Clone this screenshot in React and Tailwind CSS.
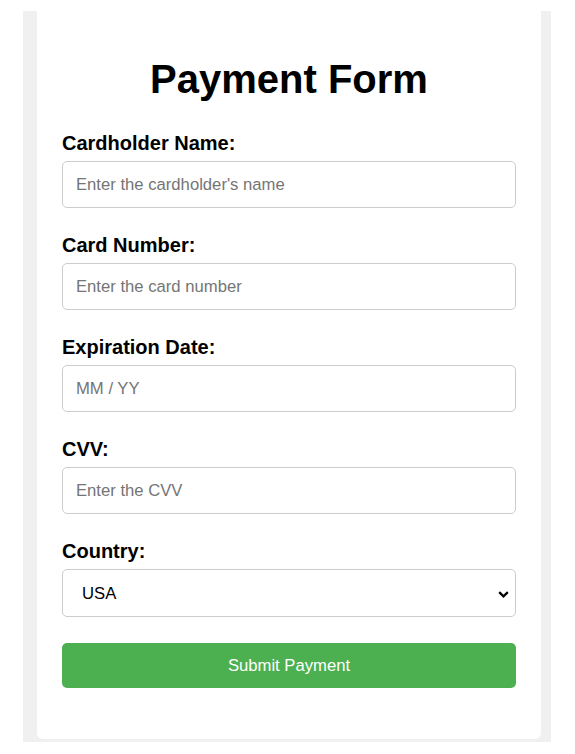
import React from "react";

function Field({ label, placeholder }) {
  return (
    <div className="mb-[26px]">
      <label className="block text-[20px] leading-[23px] font-bold text-black mb-[6px]">{label}</label>
      <input
        type="text"
        placeholder={placeholder}
        className="block w-full h-[47px] px-[13px] border border-[#cccccc] rounded-[5px] text-[16.67px] text-black placeholder:text-[#757575] outline-none bg-white"
      />
    </div>
  );
}

export default function App() {
  return (
    <div className="min-h-screen bg-white pt-[11px] pl-[23px] font-['Liberation_Sans',Arial,sans-serif]">
      <div className="w-[528px] bg-[#f0f0f0] pl-[14px] pr-[10px] pb-[3px]">
        <div className="bg-white rounded-b-[6px] px-[25px] pt-[45px] pb-[51px]">
          <h1 className="text-center text-[40px] leading-[46px] font-bold text-black mb-[30px]">Payment Form</h1>
          <Field label="Cardholder Name:" placeholder="Enter the cardholder's name" />
          <Field label="Card Number:" placeholder="Enter the card number" />
          <Field label="Expiration Date:" placeholder="MM / YY" />
          <Field label="CVV:" placeholder="Enter the CVV" />
          <div className="mb-[26px]">
            <label className="block text-[20px] leading-[23px] font-bold text-black mb-[6px]">Country:</label>
            <div className="relative">
              <select
                defaultValue="USA"
                className="block w-full h-[48px] pl-[19px] pr-[30px] border border-[#cccccc] rounded-[5px] text-[16.67px] text-black bg-white appearance-none outline-none"
              >
                <option>USA</option>
                <option>Canada</option>
                <option>UK</option>
              </select>
              <svg
                className="absolute right-[7px] top-[22px] pointer-events-none"
                width="11"
                height="7"
                viewBox="0 0 11 7"
              >
                <polyline points="1.2,1.2 5.5,5.3 9.8,1.2" fill="none" stroke="#000" strokeWidth="2.3" />
              </svg>
            </div>
          </div>
          <button className="block w-full h-[45px] bg-[#4CAF50] text-white text-[16.67px] rounded-[5px]">Submit Payment</button>
        </div>
      </div>
    </div>
  );
}
